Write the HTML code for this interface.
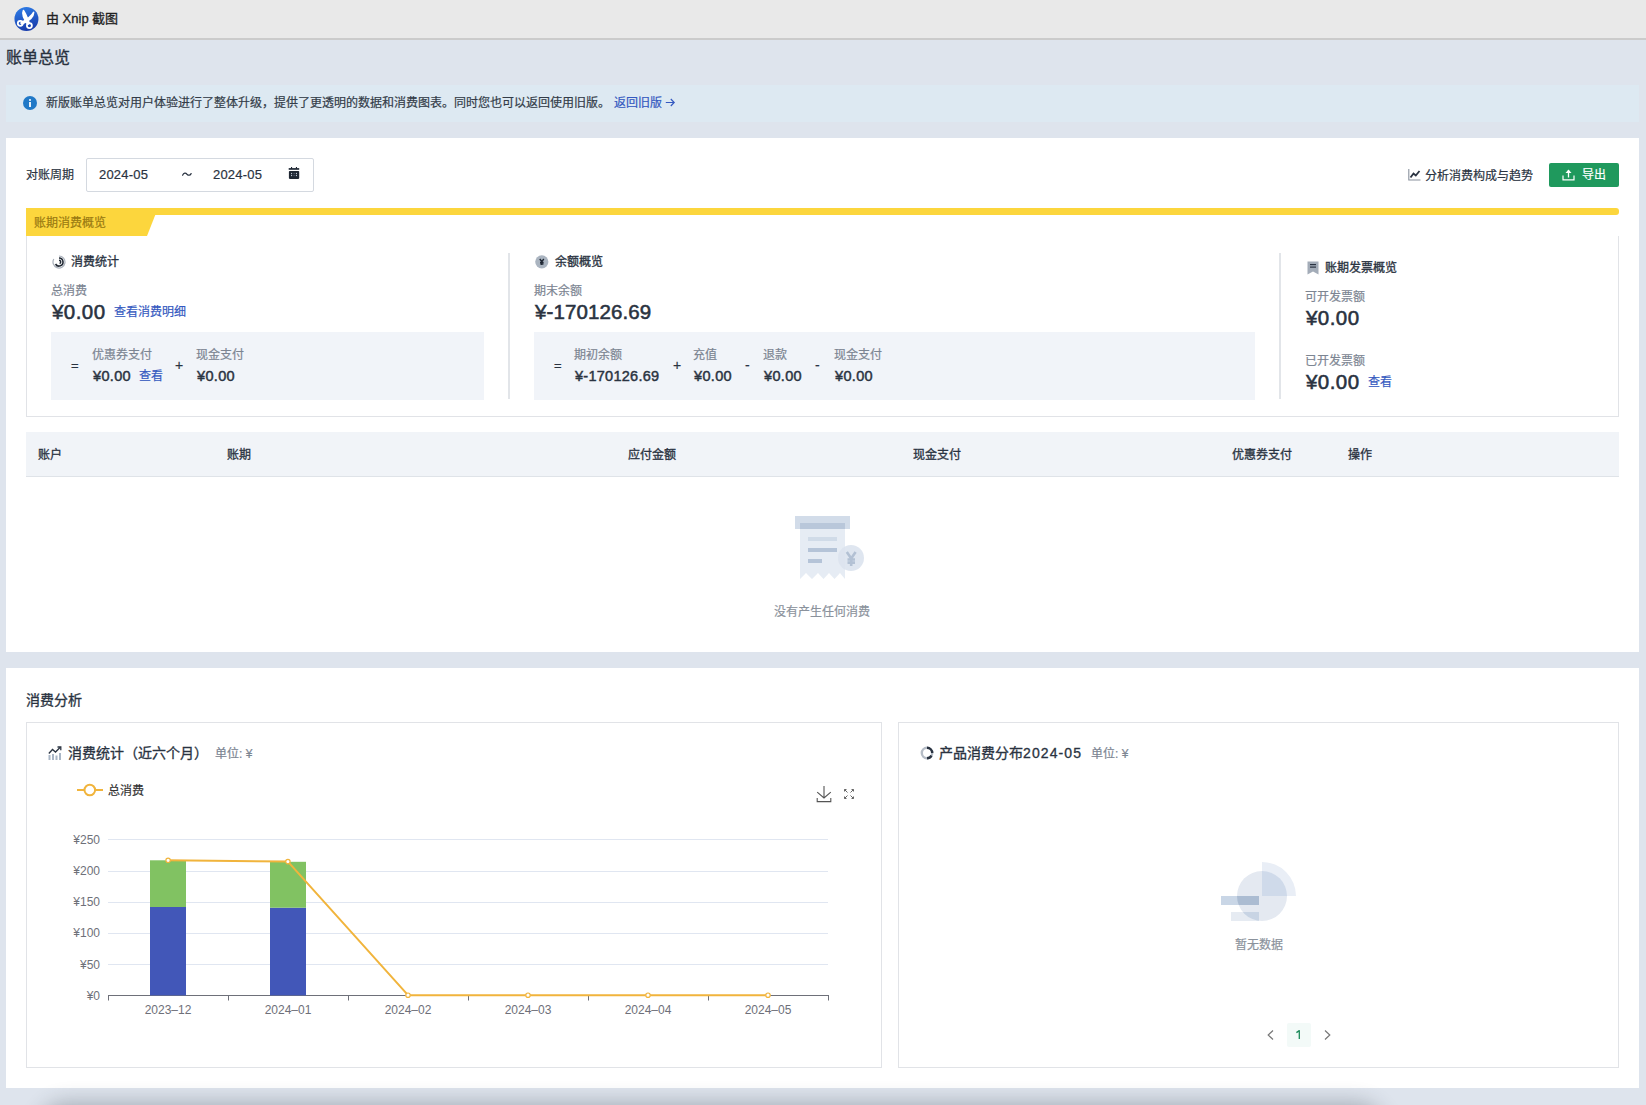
<!DOCTYPE html>
<html lang="zh-CN"><head><meta charset="utf-8">
<style>
*{box-sizing:border-box;margin:0;padding:0}
html,body{width:1646px;height:1105px;overflow:hidden}
body{position:relative;background:#dee4ed;font-family:"Liberation Sans",sans-serif;color:#2a3341;}
.a{position:absolute}
.t{position:absolute;white-space:nowrap;line-height:1;-webkit-text-stroke-width:.2px}
.t.b{-webkit-text-stroke-width:.32px}
.t.amt{-webkit-text-stroke-width:.55px}
.t.amt2{-webkit-text-stroke-width:.45px}
.f12{font-size:12px}
.g{color:#7c8592}
.lk{color:#3459c0}
.b{font-weight:400}
.m{font-weight:500}
#topbar{left:0;top:0;width:1646px;height:38px;background:#e9e9e9;border-bottom:2px solid #cbcbcb;height:40px}
.card{background:#fff}
.box{border:1px solid #e1e3e7}
.gbox{background:#f1f4f9}
.sep{width:2px;background:#e2e5e9}
</style></head><body>

<!-- top bar -->
<div id="topbar" class="a"></div>
<svg class="a" style="left:14px;top:7px" width="25" height="25" viewBox="0 0 25 25">
<defs><linearGradient id="xg" x1="0" y1="0" x2="0.3" y2="1"><stop offset="0" stop-color="#2f80ea"/><stop offset="1" stop-color="#1a3fae"/></linearGradient></defs>
<circle cx="12.45" cy="12.1" r="12" fill="url(#xg)"/>
<path d="M9.4 3.6 C11.6 6.5 12.8 10 15.2 16.2 L13.6 17.2 C10.2 11.5 7.6 7.5 9.4 3.6 Z" fill="#fff" stroke="#fff" stroke-width="1.6" stroke-linejoin="round"/>
<path d="M19.6 5.4 C17.5 9.5 14 12 7 16 L7.8 17 C15 14 19.5 10.5 19.6 5.4 Z" fill="#fff" stroke="#fff" stroke-width="1.6" stroke-linejoin="round"/>
<circle cx="6.3" cy="16.3" r="2.5" fill="none" stroke="#fff" stroke-width="1.8"/>
<circle cx="15.4" cy="18.6" r="2.5" fill="none" stroke="#fff" stroke-width="1.8"/>
</svg>
<div class="t" style="left:46px;top:12px;font-size:13px;color:#222;-webkit-text-stroke-width:.3px">由 Xnip 截图</div>

<!-- title -->
<div class="t" style="left:6px;top:50px;font-size:16px;color:#28313e;-webkit-text-stroke:.35px #28313e">账单总览</div>

<!-- banner -->
<div class="a" style="left:6px;top:85px;width:1633px;height:37px;background:#dde9f2"></div>
<svg class="a" style="left:23px;top:96px" width="14" height="14" viewBox="0 0 14 14"><circle cx="7" cy="7" r="7" fill="#2079c7"/><rect x="6.1" y="6" width="1.8" height="5" fill="#fff"/><circle cx="7" cy="4" r="1" fill="#fff"/></svg>
<div class="t f12" style="left:46px;top:97px;color:#333c48">新版账单总览对用户体验进行了整体升级，提供了更透明的数据和消费图表。同时您也可以返回使用旧版。</div>
<div class="t f12 lk" style="left:614px;top:97px">返回旧版</div><svg class="a" style="left:664px;top:97px" width="12" height="12" viewBox="0 0 12 12"><path d="M1.8 5.5 H10 M6.8 2 L10.2 5.5 L6.8 9" stroke="#3459c0" stroke-width="1.2" fill="none"/></svg>

<!-- card 1 -->
<div class="a card" style="left:6px;top:138px;width:1633px;height:514px"></div>

<div class="t f12" style="left:26px;top:169px">对账周期</div>
<div class="a" style="left:86px;top:158px;width:228px;height:34px;border:1px solid #d4d9e0;border-radius:2px;background:#fff"></div>
<div class="t" style="left:99px;top:168px;font-size:13px;letter-spacing:.2px">2024-05</div>
<svg class="a" style="left:180px;top:170px" width="14" height="8" viewBox="180 170 14 8"><path d="M182.6 175.2 C183.8 172.8 185.6 172.7 187 174.2 C188.4 175.6 190 175.7 191.1 173.6" stroke="#2a3341" stroke-width="1.25" fill="none" stroke-linecap="round"/></svg>
<div class="t" style="left:213px;top:168px;font-size:13px;letter-spacing:.2px">2024-05</div>
<svg class="a" style="left:288px;top:166px" width="12" height="14" viewBox="0 0 12 14"><rect x="0.7" y="2.1" width="10.5" height="1.7" fill="#1f2733"/><rect x="3" y="1" width="1.1" height="2" fill="#1f2733"/><rect x="7.9" y="1" width="1.1" height="2" fill="#1f2733"/><rect x="0.9" y="5" width="10.3" height="7.9" rx="0.8" fill="#1f2733"/><g fill="#b9c2d0"><rect x="3" y="6.9" width="1.1" height="1.2"/><rect x="7.9" y="6.9" width="1.1" height="1.2"/><rect x="3" y="8.9" width="1.1" height="1.2"/><rect x="7.9" y="8.9" width="1.1" height="1.2"/></g><g fill="#5a6575"><rect x="5.5" y="6.9" width="1.1" height="1.2"/><rect x="5.5" y="8.9" width="1.1" height="1.2"/></g></svg>

<svg class="a" style="left:1408px;top:168px" width="13" height="13" viewBox="0 0 13 13"><path d="M0.8 1 V12 H12.5" stroke="#8a929e" stroke-width="1.1" fill="none"/><path d="M2.5 9.5 L5.5 5.5 L7.8 7.5 L11.5 3" stroke="#2a3341" stroke-width="1.8" fill="none"/></svg>
<div class="t f12" style="left:1425px;top:170px">分析消费构成与趋势</div>
<div class="a" style="left:1549px;top:163px;width:70px;height:24px;background:#1f995d;border-radius:2px"></div>
<svg class="a" style="left:1562px;top:168px" width="13" height="13" viewBox="0 0 13 13"><path d="M1 7.5 V11.8 H12 V7.5" stroke="#fff" stroke-width="1.2" fill="none"/><path d="M6.5 9.5 V2.5" stroke="#fff" stroke-width="1.3"/><path d="M3.5 5 L6.5 1.5 L9.5 5 Z" fill="#fff"/></svg>
<div class="t f12" style="left:1582px;top:169px;color:#fff">导出</div>

<!-- yellow bar + tab -->
<div class="a" style="left:26px;top:208px;width:1593px;height:7px;background:#fcd63d;border-top-right-radius:3px;border-bottom-right-radius:3px"></div>
<svg class="a" style="left:26px;top:208px" width="140" height="28" viewBox="0 0 140 28"><polygon points="0,0 132,0 121,28 0,28" fill="#fcd63d"/></svg>
<div class="t f12" style="left:34px;top:217px;color:#9a7a12">账期消费概览</div>

<!-- overview box -->
<div class="a" style="left:26px;top:236px;width:1593px;height:181px;border:1px solid #e1e3e7;border-top:none"></div>
<div class="a sep" style="left:508px;top:253px;height:146px"></div>
<div class="a sep" style="left:1279px;top:253px;height:146px"></div>

<!-- section 1 -->
<svg class="a" style="left:52px;top:255px" width="14" height="14" viewBox="0 0 14 14"><path d="M7 1 A6 6 0 1 1 1.8 4" stroke="#aab1bb" stroke-width="1.2" fill="none"/><path d="M7 3 A4 4 0 1 1 3.54 9" stroke="#232b36" stroke-width="1.6" fill="none"/><path d="M7 5.3 A1.7 1.7 0 0 1 7.6 8.6" stroke="#232b36" stroke-width="1.5" fill="none"/></svg>
<div class="t f12 b" style="left:71px;top:256px">消费统计</div>
<div class="t f12 g" style="left:51px;top:285px">总消费</div>
<div class="t amt" style="left:52px;top:302px;font-size:20.5px;letter-spacing:.45px">¥0.00</div>
<div class="t f12 lk" style="left:114px;top:306px">查看消费明细</div>
<div class="a gbox" style="left:51px;top:332px;width:433px;height:68px"></div>
<div class="t" style="left:71px;top:359px;font-size:13px">=</div>
<div class="t f12 g" style="left:92px;top:349px">优惠券支付</div>
<div class="t amt2" style="left:93px;top:369px;font-size:14.5px;letter-spacing:.35px">¥0.00</div>
<div class="t f12 lk" style="left:139px;top:370px">查看</div>
<div class="t" style="left:175px;top:358px;font-size:14px">+</div>
<div class="t f12 g" style="left:196px;top:349px">现金支付</div>
<div class="t amt2" style="left:197px;top:369px;font-size:14.5px;letter-spacing:.35px">¥0.00</div>

<!-- section 2 -->
<svg class="a" style="left:535px;top:255px" width="14" height="14" viewBox="0 0 14 14"><circle cx="6.8" cy="6.8" r="6.6" fill="#aab4c0"/><path d="M4.8 4 L6.8 6.6 L8.8 4 M6.8 6.6 V10 M5 7.4 H8.6 M5 8.9 H8.6" stroke="#1f2733" stroke-width="1.4" fill="none"/></svg>
<div class="t f12 b" style="left:555px;top:256px">余额概览</div>
<div class="t f12 g" style="left:534px;top:285px">期末余额</div>
<div class="t amt" style="left:535px;top:302px;font-size:20.5px;letter-spacing:.1px">¥-170126.69</div>
<div class="a gbox" style="left:534px;top:332px;width:721px;height:68px"></div>
<div class="t" style="left:554px;top:359px;font-size:13px">=</div>
<div class="t f12 g" style="left:574px;top:349px">期初余额</div>
<div class="t amt2" style="left:575px;top:369px;font-size:14.5px;letter-spacing:.27px">¥-170126.69</div>
<div class="t" style="left:673px;top:358px;font-size:14px">+</div>
<div class="t f12 g" style="left:693px;top:349px">充值</div>
<div class="t amt2" style="left:694px;top:369px;font-size:14.5px;letter-spacing:.35px">¥0.00</div>
<div class="t" style="left:745px;top:358px;font-size:14px">-</div>
<div class="t f12 g" style="left:763px;top:349px">退款</div>
<div class="t amt2" style="left:764px;top:369px;font-size:14.5px;letter-spacing:.35px">¥0.00</div>
<div class="t" style="left:815px;top:358px;font-size:14px">-</div>
<div class="t f12 g" style="left:834px;top:349px">现金支付</div>
<div class="t amt2" style="left:835px;top:369px;font-size:14.5px;letter-spacing:.35px">¥0.00</div>

<!-- section 3 -->
<svg class="a" style="left:1307px;top:261px" width="12" height="14" viewBox="0 0 12 14"><path d="M0.5 0.5 H11.5 V13.5 L6 10.5 L0.5 13.5 Z" fill="#a3acb8"/><rect x="3" y="3" width="6" height="1.2" fill="#2a3341"/><rect x="3" y="5.5" width="6" height="1.2" fill="#2a3341"/></svg>
<div class="t f12 b" style="left:1325px;top:262px">账期发票概览</div>
<div class="t f12 g" style="left:1305px;top:291px">可开发票额</div>
<div class="t amt" style="left:1306px;top:308px;font-size:20.5px;letter-spacing:.45px">¥0.00</div>
<div class="t f12 g" style="left:1305px;top:355px">已开发票额</div>
<div class="t amt" style="left:1306px;top:372px;font-size:20.5px;letter-spacing:.45px">¥0.00</div>
<div class="t f12 lk" style="left:1368px;top:376px">查看</div>

<!-- table header -->
<div class="a" style="left:26px;top:432px;width:1593px;height:45px;background:#f1f4f8;border-bottom:1px solid #dfe3e8"></div>
<div class="t f12 b" style="left:38px;top:449px">账户</div>
<div class="t f12 b" style="left:227px;top:449px">账期</div>
<div class="t f12 b" style="left:628px;top:449px">应付金额</div>
<div class="t f12 b" style="left:913px;top:449px">现金支付</div>
<div class="t f12 b" style="left:1232px;top:449px">优惠券支付</div>
<div class="t f12 b" style="left:1348px;top:449px">操作</div>

<!-- empty receipt -->
<svg class="a" style="left:790px;top:510px" width="80" height="75" viewBox="0 0 80 75">
<rect x="5" y="6" width="55" height="13" fill="#d2dce9"/>
<path d="M10 13 H55 V69 L50 63 L44.5 69 L39 63 L33.5 69 L28 63 L22 69 L16 63 L10 69 Z" fill="#e6ecf4"/>
<rect x="10" y="13" width="45" height="6" fill="#b9c7da"/>
<rect x="18" y="27" width="29" height="4" fill="#d0dbe8"/>
<rect x="18" y="38" width="29" height="4" fill="#b5c4d8"/>
<rect x="18" y="49" width="14" height="4" fill="#b5c4d8"/>
<circle cx="61" cy="48" r="13" fill="#dbe3ee" opacity="0.9"/>
<path d="M56.8 42 L61.2 48.5 L65.6 42 M61.2 48.5 V55.9 M57.5 49.5 H65 M57.5 52.6 H65" stroke="#b3c1d4" stroke-width="2.6" fill="none"/>
</svg>
<div class="t f12" style="left:774px;top:606px;color:#8b929c">没有产生任何消费</div>

<!-- card 2 -->
<div class="a card" style="left:6px;top:668px;width:1633px;height:420px"></div>
<div class="t b" style="left:26px;top:693px;font-size:14px">消费分析</div>

<div class="a box" style="left:26px;top:722px;width:856px;height:346px"></div>
<div class="a box" style="left:898px;top:722px;width:721px;height:346px"></div>


<!-- chart 1 header -->
<svg class="a" style="left:48px;top:746px" width="14" height="14" viewBox="0 0 14 14"><rect x="0.5" y="9" width="2" height="5" fill="#a9b6c6"/><rect x="4" y="8" width="2" height="6" fill="#a9b6c6"/><rect x="7.5" y="9.5" width="2" height="4.5" fill="#a9b6c6"/><rect x="11" y="7" width="2" height="7" fill="#a9b6c6"/><path d="M0.8 7.5 L4.5 3.5 L7.5 6 L12 1.5" stroke="#2a3341" stroke-width="1.3" fill="none"/><path d="M9.5 1 H12.8 V4.3" stroke="#2a3341" stroke-width="1.3" fill="none"/></svg>
<div class="t b" style="left:67.5px;top:746px;font-size:14px">消费统计（近六个月）</div>
<div class="t f12 g" style="left:215px;top:748px">单位: ¥</div>
<svg class="a" style="left:76px;top:783px" width="28" height="14" viewBox="0 0 28 14"><line x1="1" y1="7" x2="27" y2="7" stroke="#f1b43c" stroke-width="2"/><circle cx="13.8" cy="7" r="5.3" fill="#fff" stroke="#f1b43c" stroke-width="2"/></svg>
<div class="t f12" style="left:108px;top:785px;color:#333">总消费</div>
<svg class="a" style="left:815px;top:785px" width="18" height="18" viewBox="0 0 18 18"><path d="M9 1 V13 M2.2 7.2 L9 13 L15.8 7.2 M2.2 13 V16.6 H15.8 V13" stroke="#555" stroke-width="1.1" fill="none"/></svg>
<svg class="a" style="left:843px;top:788px" width="12" height="12" viewBox="0 0 12 12"><path d="M1.5 1.5 L4.5 4.5 M1.5 1.5 V3.5 M1.5 1.5 H3.5 M10.5 1.5 L7.5 4.5 M10.5 1.5 V3.5 M10.5 1.5 H8.5 M1.5 10.5 L4.5 7.5 M1.5 10.5 V8.5 M1.5 10.5 H3.5 M10.5 10.5 L7.5 7.5 M10.5 10.5 V8.5 M10.5 10.5 H8.5" stroke="#666" stroke-width="1" fill="none"/></svg>
<svg class="a" style="left:26px;top:722px" width="856" height="346" viewBox="26 722 856 346" font-family="Liberation Sans" font-size="12" fill="#6e7079">
<line x1="108" y1="839.5" x2="828" y2="839.5" stroke="#e0e6f1" stroke-width="1"/><line x1="108" y1="871.5" x2="828" y2="871.5" stroke="#e0e6f1" stroke-width="1"/><line x1="108" y1="902.5" x2="828" y2="902.5" stroke="#e0e6f1" stroke-width="1"/><line x1="108" y1="933.5" x2="828" y2="933.5" stroke="#e0e6f1" stroke-width="1"/><line x1="108" y1="964.5" x2="828" y2="964.5" stroke="#e0e6f1" stroke-width="1"/>
<line x1="108" y1="995.5" x2="829" y2="995.5" stroke="#6e7079" stroke-width="1"/>
<line x1="108.5" y1="995" x2="108.5" y2="1000.5" stroke="#6e7079" stroke-width="1"/><line x1="228.5" y1="995" x2="228.5" y2="1000.5" stroke="#6e7079" stroke-width="1"/><line x1="348.5" y1="995" x2="348.5" y2="1000.5" stroke="#6e7079" stroke-width="1"/><line x1="468.5" y1="995" x2="468.5" y2="1000.5" stroke="#6e7079" stroke-width="1"/><line x1="588.5" y1="995" x2="588.5" y2="1000.5" stroke="#6e7079" stroke-width="1"/><line x1="708.5" y1="995" x2="708.5" y2="1000.5" stroke="#6e7079" stroke-width="1"/><line x1="828.5" y1="995" x2="828.5" y2="1000.5" stroke="#6e7079" stroke-width="1"/>
<text x="100" y="843.7" text-anchor="end">¥250</text><text x="100" y="874.9" text-anchor="end">¥200</text><text x="100" y="906.1" text-anchor="end">¥150</text><text x="100" y="937.3" text-anchor="end">¥100</text><text x="100" y="968.5" text-anchor="end">¥50</text><text x="100" y="999.7" text-anchor="end">¥0</text>
<text x="168" y="1014" text-anchor="middle">2023–12</text><text x="288" y="1014" text-anchor="middle">2024–01</text><text x="408" y="1014" text-anchor="middle">2024–02</text><text x="528" y="1014" text-anchor="middle">2024–03</text><text x="648" y="1014" text-anchor="middle">2024–04</text><text x="768" y="1014" text-anchor="middle">2024–05</text>
<rect x="150" y="907" width="36" height="88.4" fill="#4257b8"/><rect x="150" y="860.3" width="36" height="46.7" fill="#81c262"/>
<rect x="270" y="907.7" width="36" height="87.7" fill="#4257b8"/><rect x="270" y="861.8" width="36" height="45.9" fill="#81c262"/>
<polyline points="168.1,860.3 287.9,861.6 408,995.2 528,995.2 648,995.2 768,995.2" fill="none" stroke="#f1b43c" stroke-width="2" stroke-linejoin="round"/>
<circle cx="168.1" cy="860.3" r="2.2" fill="#fff" stroke="#f1b43c" stroke-width="1.2"/><circle cx="287.9" cy="861.6" r="2.2" fill="#fff" stroke="#f1b43c" stroke-width="1.2"/><circle cx="408" cy="995.2" r="2.2" fill="#fff" stroke="#f1b43c" stroke-width="1.2"/><circle cx="528" cy="995.2" r="2.2" fill="#fff" stroke="#f1b43c" stroke-width="1.2"/><circle cx="648" cy="995.2" r="2.2" fill="#fff" stroke="#f1b43c" stroke-width="1.2"/><circle cx="768" cy="995.2" r="2.2" fill="#fff" stroke="#f1b43c" stroke-width="1.2"/>
</svg>
<!-- chart 2 -->
<svg class="a" style="left:920px;top:746px" width="14" height="14" viewBox="0 0 14 14"><circle cx="7" cy="7" r="5.2" stroke="#b5bcc6" stroke-width="2.4" fill="none"/><path d="M7 1.8 A5.2 5.2 0 0 1 12.2 7" stroke="#2a3341" stroke-width="2.4" fill="none"/><path d="M11.5 9.6 A5.2 5.2 0 0 1 7 12.2" stroke="#2a3341" stroke-width="2.4" fill="none"/></svg>
<div class="t b" style="left:939px;top:745.5px;font-size:14px">产品消费分布<span style="letter-spacing:1.1px">2024-05</span></div>
<div class="t f12 g" style="left:1091px;top:748px">单位: ¥</div>
<svg class="a" style="left:1210px;top:850px" width="100" height="80" viewBox="1210 850 100 80">
<defs><clipPath id="cc"><circle cx="1262" cy="896" r="25"/></clipPath></defs>
<circle cx="1262" cy="896" r="25" fill="#e4e9f1"/>
<path d="M1262 896 V862 A34 34 0 0 1 1296 896 Z" fill="#e9eef6"/>
<path d="M1262 896 V871 A25 25 0 0 1 1287 896 Z" fill="#cfdaea"/>
<rect x="1221" y="896" width="38" height="9" fill="#c9d6e6"/>
<rect x="1221" y="896" width="38" height="9" fill="#abbcd2" clip-path="url(#cc)"/>
<rect x="1231" y="912" width="28" height="9" fill="#e6ebf2"/>
<rect x="1231" y="912" width="28" height="9" fill="#c8d4e4" clip-path="url(#cc)"/>
</svg>
<div class="t f12" style="left:1235px;top:939px;color:#8b929c">暂无数据</div>
<svg class="a" style="left:1266px;top:1029px" width="9" height="12" viewBox="0 0 9 12"><path d="M7 1.5 L2.2 6 L7 10.5" stroke="#777" stroke-width="1.2" fill="none"/></svg>
<div class="a" style="left:1287px;top:1023px;width:24px;height:24px;background:#f3faf8;border-radius:2px"></div>
<svg class="a" style="left:1294px;top:1029px" width="8" height="12" viewBox="1294 1029 8 12"><path d="M1299.3 1039 V1030.6 L1296.4 1032.6" stroke="#1b8a5a" stroke-width="1.3" fill="none" stroke-linejoin="round"/></svg>
<svg class="a" style="left:1323px;top:1029px" width="9" height="12" viewBox="0 0 9 12"><path d="M2 1.5 L6.8 6 L2 10.5" stroke="#777" stroke-width="1.2" fill="none"/></svg>

<!-- bottom shadow -->
<div class="a" style="left:0;top:1088px;width:1646px;height:17px;overflow:hidden;pointer-events:none">
</div>
<div class="a" style="left:48px;top:1112px;width:1327px;height:40px;border-radius:20px;box-shadow:0 0 20px 10px rgba(45,55,65,0.3)"></div>
</body></html>
